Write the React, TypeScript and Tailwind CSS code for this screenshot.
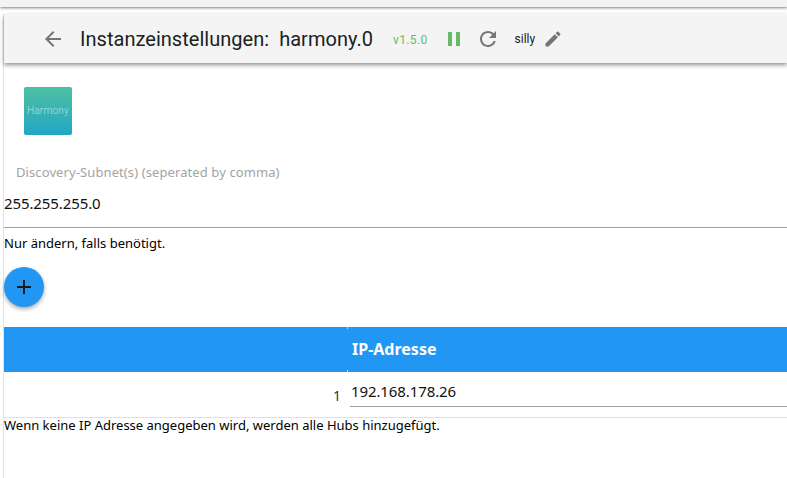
import React from "react";

const Ic = ({ d, c, s, cls }: { d: string; c: string; s: number; cls?: string }) => (
  <svg width={s} height={s} viewBox="0 0 24 24" fill={c} className={cls}><path d={d} /></svg>
);

export default function App() {
  return (
    <div className="w-[787px] h-[478px] overflow-hidden bg-white flex flex-col font-['Noto_Sans',sans-serif] text-black">
      <div className="h-[7px] shrink-0 bg-[#f3f3f3] shadow-[0_1px_3px_rgba(0,0,0,0.5)]" />
      <div className="flex-1 mt-[7px] ml-[3px] border-l border-[#e2e2e2] flex flex-col min-h-0">
        <div className="h-[49px] shrink-0 bg-[#f4f4f4] rounded-tl-[4px] shadow-[0_2px_4px_rgba(0,0,0,0.45)] flex items-center pl-[37px] font-['Roboto',sans-serif]">
          <Ic s={24} c="#757575" d="M20 11H7.83l5.59-5.59L12 4l-8 8 8 8 1.41-1.41L7.83 13H20v-2z" />
          <span className="ml-[15px] text-[20px] leading-6 text-[#212121] whitespace-pre tracking-[0.03px]">Instanzeinstellungen:  harmony.0</span>
          <span className="ml-[20px] text-[12px] tracking-[0.35px] mt-[3px] text-[#66bb6a]">v1.5.0</span>
          <Ic s={24} c="#66bb6a" cls="ml-[14px]" d="M6 19h4V5H6v14zm8-14v14h4V5h-4z" />
          <Ic s={24} c="#757575" cls="ml-[10px]" d="M17.65 6.35C16.2 4.9 14.21 4 12 4c-4.42 0-7.99 3.58-7.99 8s3.57 8 7.99 8c3.73 0 6.84-2.55 7.73-6h-2.08c-.82 2.33-3.04 4-5.65 4-3.31 0-6-2.69-6-6s2.69-6 6-6c1.66 0 3.14.69 4.22 1.78L13 11h7V4l-2.35 2.35z" />
          <span className="ml-[15px] text-[12px] text-[#212121]">silly</span>
          <Ic s={20} c="#757575" cls="ml-[8px]" d="M3 17.25V21h3.75L17.81 9.94l-3.75-3.75L3 17.25zM20.71 7.04c.39-.39.39-1.02 0-1.41l-2.34-2.34c-.39-.39-1.02-.39-1.41 0l-1.83 1.83 3.75 3.75 1.83-1.83z" />
        </div>

        <div className="mt-[24px] ml-[20px] w-[48px] h-[48px] shrink-0 rounded-[2px] bg-gradient-to-b from-[#4dc0a0] to-[#20a6c6] flex items-center justify-center pb-[2px] text-[10px] tracking-[0.2px] text-[#b9dfe0] font-['Roboto',sans-serif] font-light">
          Harmony
        </div>

        <div className="mt-[28px] ml-[12px] h-[18px] shrink-0 text-[13px] leading-[18px] text-[#a3a3a3] tracking-[0.1px]">Discovery-Subnet(s) (seperated by comma)</div>
        <div className="h-[47px] shrink-0 border-b border-[#a0a0a0] text-[15px] leading-[30px] pt-[7px] tracking-[-0.1px] text-[#111]">255.255.255.0</div>
        <div className="mt-[6px] h-[18px] shrink-0 text-[13px] leading-[18px]">Nur ändern, falls benötigt.</div>
        <div className="mt-[15px] w-[40px] h-[40px] shrink-0 rounded-full bg-[#2196f3] shadow-[0_2px_4px_rgba(0,0,0,0.35)] flex items-center justify-center">
          <Ic s={24} c="#1a1a1a" d="M19 13h-6v6h-2v-6H5v-2h6V5h2v6h6v2z" />
        </div>

        <div className="mt-[20px] h-[45px] shrink-0 bg-[#2196f3] flex">
          <div className="w-[343px] shrink-0" />
          <div className="w-[1px] shrink-0 flex flex-col justify-between">
            <div className="h-[2px] bg-[#bfe0fa]" />
            <div className="h-[2px] bg-[#bfe0fa]" />
          </div>
          <div className="pl-[4px] text-[16px] font-bold leading-[45px] text-white">IP-Adresse</div>
        </div>
        <div className="h-[46px] shrink-0 border-b border-[#e0e0e0] flex">
          <div className="w-[337px] shrink-0 text-right text-[14px] leading-[44px] pt-[2px] text-[#333]">1</div>
          <div className="ml-[9px] flex-1 h-[35px] border-b border-[#a0a0a0] pl-[1px] text-[15px] leading-[38px] tracking-[-0.1px] text-[#111]">192.168.178.26</div>
        </div>
        <div className="h-[18px] shrink-0 text-[13px] leading-[15px]">Wenn keine IP Adresse angegeben wird, werden alle Hubs hinzugefügt.</div>
      </div>
    </div>
  );
}
